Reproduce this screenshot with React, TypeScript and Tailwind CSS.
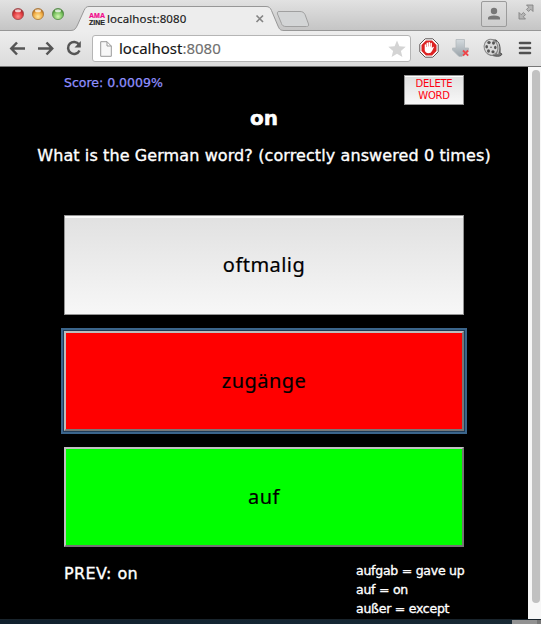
import React from "react";

function TrafficLights() {
  return (
    <svg width="54" height="16" viewBox="0 0 54 16" className="ml-[11px] mt-[6px] shrink-0">
      <defs>
        <radialGradient id="red" cx=".5" cy=".72" r=".6"><stop offset="0" stopColor="#ff8e8a" /><stop offset=".65" stopColor="#e23c40" /><stop offset="1" stopColor="#a8282d" /></radialGradient>
        <radialGradient id="amber" cx=".5" cy=".72" r=".6"><stop offset="0" stopColor="#ffe9a0" /><stop offset=".65" stopColor="#f2ae46" /><stop offset="1" stopColor="#b87322" /></radialGradient>
        <radialGradient id="green" cx=".5" cy=".72" r=".6"><stop offset="0" stopColor="#d3f8b2" /><stop offset=".65" stopColor="#7cc462" /><stop offset="1" stopColor="#4b8c3a" /></radialGradient>
      </defs>
      <circle cx="7" cy="8" r="5.600" fill="url(#red)" stroke="#a04a4c" strokeWidth=".8" />
      <circle cx="27" cy="8" r="5.600" fill="url(#amber)" stroke="#a8793c" strokeWidth=".8" />
      <circle cx="47" cy="8" r="5.600" fill="url(#green)" stroke="#568a4a" strokeWidth=".8" />
      <ellipse cx="7" cy="4.800" rx="3" ry="1.500" fill="#fff" opacity=".75" />
      <ellipse cx="27" cy="4.800" rx="3" ry="1.500" fill="#fff" opacity=".75" />
      <ellipse cx="47" cy="4.800" rx="3" ry="1.500" fill="#fff" opacity=".75" />
    </svg>
  );
}

function TabStrip() {
  return (
    <div className="relative flex h-[31px] items-start bg-linear-to-b from-[#e2e2e2] to-[#c4c4c4]">
      <svg width="541" height="31" className="absolute inset-0">
        <path d="M0 30.500H71C75 30.500 76 28 77.500 25L84 10.500C85.500 7.500 86.500 6.500 89 6.500H266C269 6.500 270.500 8 271.500 10.500L278 26C279.500 29.500 280.500 30.500 284 30.500H541V32H0Z" fill="#ededed" stroke="#979797" />
        <path d="M279 11.500H300C302.500 11.500 304 12.500 305 14.500L308.500 24C309 26 308 26.500 306.500 26.500H286C283.500 26.500 282 25.500 281.500 23.500L277.500 14C277 12.500 277.500 11.500 279 11.500Z" fill="#d3d5d6" stroke="#a0a0a0" />
        <path d="M256.500 15.500L263 22M263 15.500L256.500 22" stroke="#858585" strokeWidth="1.700" />
      </svg>
      <div className="relative flex w-full items-start">
        <TrafficLights />
        <div className="ml-[24px] mt-[12px] w-[17px] whitespace-nowrap font-['Liberation_Sans',sans-serif] text-[7px] font-bold leading-[7px] text-[#272727] [-webkit-text-stroke:0.2px]">
          <div className="text-[#f20a8c]">AMA</div>
          <div>ZINE</div>
        </div>
        <div className="ml-px mt-[11px] whitespace-nowrap font-['Noto_Sans',sans-serif] text-[11.500px] leading-4 tracking-[0.1px] text-[#191919] [-webkit-text-stroke:0.15px]">localhost:8080</div>
      </div>
      <div className="absolute left-[481px] top-px flex h-[26px] w-[26px] items-center justify-center rounded-[2px] border border-[#9b9b9b] bg-linear-to-b from-[#dedede] to-[#cdcdcd]">
        <svg width="14" height="14"><circle cx="7" cy="4" r="3.200" fill="#777" /><path d="M1 12.500V11Q1 8.500 7 8.500T13 11V12.500Z" fill="#777" /></svg>
      </div>
      <svg width="16" height="16" viewBox="0 0 16 16" className="absolute left-[518px] top-[4px]" fill="#b5b5b5" stroke="#7c7c7c" strokeWidth=".8">
        <path d="M8.500 1H15V7.500L12.800 5.300L10.600 7.500L8.500 5.400L10.700 3.200ZM1 8.500L3.200 10.700L5.400 8.500L7.500 10.600L5.300 12.800L7.500 15H1Z" />
      </svg>
    </div>
  );
}

function BlockIcon() {
  return (
    <svg width="20" height="20" viewBox="0 0 20 20">
      <path d="M6.200 .8H13.800L19.200 6.200V13.800L13.800 19.200H6.200L.8 13.800V6.200Z" fill="#fff" stroke="#5d5555" />
      <path d="M6.900 2.500H13.100L17.500 6.900V13.100L13.100 17.500H6.900L2.500 13.100V6.900Z" fill="#dc2222" />
      <path d="M5.700 10V7.100Q5.700 6.300 6.400 6.300T7.100 7.100V9H7.500V5.400Q7.500 4.500 8.300 4.500T9.100 5.400V8.500H9.500V4.800Q9.500 4 10.300 4T11.100 4.800V8.500H11.500V5.600Q11.500 4.800 12.200 4.800T12.900 5.600V10.200L13.700 9Q14.700 8.300 15 9L13.200 12.800Q12 15.300 9.500 15.300Q6 15 5.700 12Z" fill="#fff" />
    </svg>
  );
}

function DownloadIcon() {
  return (
    <svg width="20" height="20" viewBox="0 0 20 20">
      <defs><linearGradient id="dl" x2="0" y2="1"><stop stopColor="#d4dade" /><stop offset="1" stopColor="#9aa3a9" /></linearGradient></defs>
      <path d="M5 1.500H13.500V10H17.500V12L11 18.500H8L1.500 12V10H5Z" fill="url(#dl)" stroke="#b3b9bd" strokeWidth=".8" />
      <path d="M12 12.500L17.200 17.700M17.200 12.500L12 17.700" stroke="#f04449" strokeWidth="1.800" />
    </svg>
  );
}

function FilmIcon() {
  return (
    <svg width="20" height="20" viewBox="0 0 20 20">
      <path d="M8 2L13 2Q18 5 17 15L19 16Q18 19 12 18L7 17Z" fill="#777" stroke="#515151" />
      <path d="M14 4Q17 9 14.500 16" fill="none" stroke="#c6c6c6" strokeWidth="1.500" />
      <ellipse cx="8" cy="9.300" rx="6.800" ry="8" fill="#d9d9d9" stroke="#888" transform="rotate(-15 8 9.300)" />
      <g fill="#555">
        <ellipse cx="6" cy="4.500" rx="1.700" ry="1.500" /><ellipse cx="10.500" cy="5" rx="1.500" ry="1.700" />
        <ellipse cx="3.700" cy="8.700" rx="1.300" ry="1.700" /><ellipse cx="12.300" cy="9.500" rx="1.200" ry="1.800" />
        <ellipse cx="5.500" cy="13" rx="1.500" ry="1.700" /><ellipse cx="10" cy="13.800" rx="1.600" ry="1.500" />
        <circle cx="8" cy="9.300" r=".8" />
      </g>
    </svg>
  );
}

function Toolbar() {
  return (
    <div className="flex h-[36px] items-center border-b border-[#777] bg-linear-to-b from-[#ededed] to-[#dcdcdc]">
      <svg width="84" height="20" viewBox="0 0 84 20" fill="none" stroke="#555" strokeWidth="2.500" className="ml-[6px] mt-[-2px] shrink-0">
        <path d="M19 10.500H6M11 4.500L5.300 10.500L11 16.500" />
        <path d="M32 10.500H45M40.500 4.500L46.200 10.500L40.500 16.500" />
        <path d="M73 6.500A6 6 0 1 0 73.500 12.500" />
        <path d="M74.800 3V9.500H68.500Z" fill="#555" stroke="none" />
      </svg>
      <div className="ml-[2px] flex h-[27px] w-[319px] shrink-0 items-center rounded-[3px] border border-[#b5b5b5] bg-white">
        <svg width="12" height="16" viewBox="0 0 12 16" className="ml-[7px]" fill="#f8f8f8" stroke="#999"><path d="M.7 .7H7L11.300 5V15.300H.7ZM7 .7V5H11.300" /></svg>
        <div className="ml-[7px] mt-[-2px] w-[278px] whitespace-nowrap font-['Noto_Sans',sans-serif] text-[15px] leading-5 text-[#6f6f6f] [-webkit-text-stroke:0.15px]"><span className="text-[#151515]">localhost</span>:8080</div>
        <svg width="18" height="18" viewBox="0 0 18 18" className="-ml-[9px] shrink-0" fill="#d4d4d4"><path d="M9 .5L11.400 6.300L17.700 6.800L12.900 10.900L14.400 17L9 13.700L3.600 17L5.100 10.900L.3 6.800L6.600 6.300Z" /></svg>
      </div>
      <div className="ml-[8px] mt-[-1px] flex items-center gap-[12px]">
        <BlockIcon /><DownloadIcon /><FilmIcon />
      </div>
      <svg width="14" height="14" className="ml-[15px] mt-[-1px]" stroke="#505050" strokeWidth="2.600" strokeLinecap="round"><path d="M2 2H12M2 7H12M2 12H12" /></svg>
    </div>
  );
}

function Quiz() {
  return (
    <main className="h-full w-[528px] shrink-0 overflow-hidden bg-black font-['DejaVu_Sans',sans-serif] text-white">
      <div className="ml-[64px] flex h-[38px] w-[400px] items-start justify-between pt-[8px]">
        <div className="whitespace-nowrap text-[12.500px] leading-4 text-[#9090ff] [-webkit-text-stroke:0.25px]">Score: 0.0009%</div>
        <button className="h-[30px] w-[60px] border border-[#979797] bg-linear-to-b from-[#e0e0e0] to-[#f8f8f8] p-0 text-center text-[10px] leading-[12px] tracking-[-0.25px] text-[#ff0010] shadow-[inset_0_1px_0_#fff]">DELETE<br />WORD</button>
      </div>
      <h1 className="text-center text-[20px] font-bold leading-[26px] [-webkit-text-stroke:0.5px]">on</h1>
      <p className="mt-[13px] whitespace-nowrap text-center text-[16px] leading-[24px] tracking-[0.1px] [-webkit-text-stroke:0.35px]">What is the German word? (correctly answered 0 times)</p>
      <div className="ml-[64px] mt-[47px] flex w-[400px] flex-col gap-[16px] font-['Noto_Sans',sans-serif] text-[20px] tracking-[0.45px] text-black [-webkit-text-stroke:0.2px]">
        <button className="h-[100px] border border-[#949494] bg-linear-to-b from-[#e1e1e1] to-[#f7f7f7] shadow-[inset_0_2px_0_#fafafa]">oftmalig</button>
        <button className="h-[100px] border-2 border-b-[#777] border-l-[#bdbdbd] border-r-[#777] border-t-[#bdbdbd] bg-[#ff0000] shadow-[0_0_0_1px_#203c57] outline-2 outline-offset-1 outline-[#3b658b]"><span className="">zugänge</span></button>
        <button className="h-[100px] border-2 border-b-[#747474] border-l-[#c0c0c0] border-r-[#747474] border-t-[#c0c0c0] bg-[#00ff00]">auf</button>
      </div>
      <div className="ml-[64px] mt-[14px] flex w-[400px] justify-between whitespace-nowrap [-webkit-text-stroke:0.35px]">
        <div className="pt-px text-[16px] leading-[24px] tracking-[0.4px]">PREV: on</div>
        <div className="w-[108px] text-[12.500px] leading-[19px] tracking-[-0.25px]">
          <div>aufgab = gave up</div><div>auf = on</div><div>außer = except</div>
        </div>
      </div>
    </main>
  );
}

export default function App() {
  return (
    <div className="flex h-[624px] w-[541px] flex-col overflow-hidden bg-black">
      <TabStrip />
      <Toolbar />
      <div className="flex h-[552px] shrink-0">
        <Quiz />
        <div className="h-full w-[13px] bg-[#f7f7f7] pl-[4px] pt-[3px]"><div className="h-[533px] w-[8px] rounded-full bg-[#c1c1c1]" /></div>
      </div>
      <div className="flex h-[5px] shrink-0 justify-between border-t border-[#19242c] bg-linear-to-r from-[#10202d] via-[#142633] to-[#182934]"><div className="ml-auto h-full w-[29px] border-r-4 border-[#777] bg-[#929292]" /></div>
    </div>
  );
}
